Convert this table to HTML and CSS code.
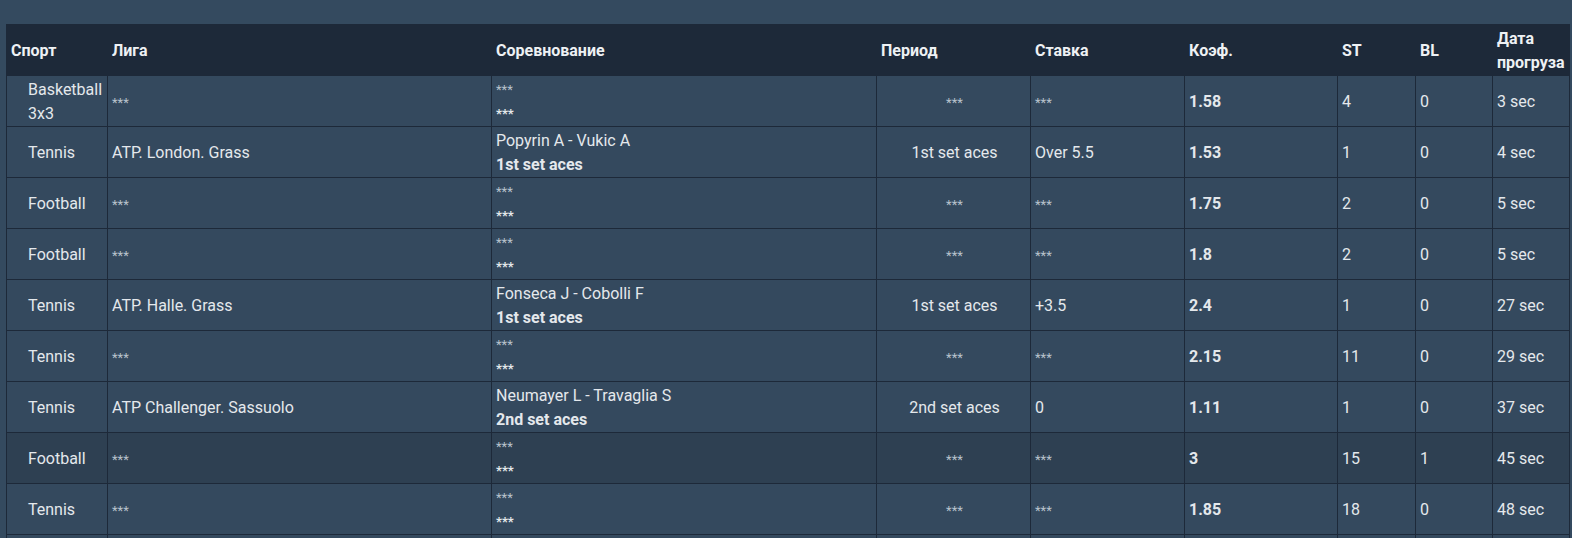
FILE: index.html
```html
<!DOCTYPE html>
<html lang="ru">
<head>
<meta charset="utf-8">
<title>Прогрузы</title>
<link rel="stylesheet" href="styles.css">
</head>
<body>
<div class="page">
  <table class="grid">
    <colgroup>
      <col class="c-sport"><col class="c-league"><col class="c-event"><col class="c-period"><col class="c-bet"><col class="c-odds"><col class="c-st"><col class="c-bl"><col class="c-date">
    </colgroup>
    <thead>
      <tr>
        <th>Спорт</th><th>Лига</th><th>Соревнование</th><th>Период</th><th>Ставка</th><th>Коэф.</th><th>ST</th><th>BL</th><th>Дата прогруза</th>
      </tr>
    </thead>
    <tbody>
      <tr>
        <td class="sport">Basketball 3x3</td><td><span class="hid">***</span></td>
        <td><div class="hid">***</div><div class="hid b">***</div></td>
        <td class="center"><span class="hid">***</span></td><td><span class="hid">***</span></td>
        <td class="b">1.58</td><td>4</td><td>0</td><td>3 sec</td>
      </tr>
      <tr>
        <td class="sport">Tennis</td><td>ATP. London. Grass</td>
        <td><div>Popyrin A - Vukic A</div><div class="b">1st set aces</div></td>
        <td class="center">1st set aces</td><td>Over 5.5</td>
        <td class="b">1.53</td><td>1</td><td>0</td><td>4 sec</td>
      </tr>
      <tr>
        <td class="sport">Football</td><td><span class="hid">***</span></td>
        <td><div class="hid">***</div><div class="hid b">***</div></td>
        <td class="center"><span class="hid">***</span></td><td><span class="hid">***</span></td>
        <td class="b">1.75</td><td>2</td><td>0</td><td>5 sec</td>
      </tr>
      <tr>
        <td class="sport">Football</td><td><span class="hid">***</span></td>
        <td><div class="hid">***</div><div class="hid b">***</div></td>
        <td class="center"><span class="hid">***</span></td><td><span class="hid">***</span></td>
        <td class="b">1.8</td><td>2</td><td>0</td><td>5 sec</td>
      </tr>
      <tr>
        <td class="sport">Tennis</td><td>ATP. Halle. Grass</td>
        <td><div>Fonseca J - Cobolli F</div><div class="b">1st set aces</div></td>
        <td class="center">1st set aces</td><td>+3.5</td>
        <td class="b">2.4</td><td>1</td><td>0</td><td>27 sec</td>
      </tr>
      <tr>
        <td class="sport">Tennis</td><td><span class="hid">***</span></td>
        <td><div class="hid">***</div><div class="hid b">***</div></td>
        <td class="center"><span class="hid">***</span></td><td><span class="hid">***</span></td>
        <td class="b">2.15</td><td>11</td><td>0</td><td>29 sec</td>
      </tr>
      <tr>
        <td class="sport">Tennis</td><td>ATP Challenger. Sassuolo</td>
        <td><div>Neumayer L - Travaglia S</div><div class="b">2nd set aces</div></td>
        <td class="center">2nd set aces</td><td>0</td>
        <td class="b">1.11</td><td>1</td><td>0</td><td>37 sec</td>
      </tr>
      <tr class="hl">
        <td class="sport">Football</td><td><span class="hid">***</span></td>
        <td><div class="hid">***</div><div class="hid b">***</div></td>
        <td class="center"><span class="hid">***</span></td><td><span class="hid">***</span></td>
        <td class="b">3</td><td>15</td><td>1</td><td>45 sec</td>
      </tr>
      <tr>
        <td class="sport">Tennis</td><td><span class="hid">***</span></td>
        <td><div class="hid">***</div><div class="hid b">***</div></td>
        <td class="center"><span class="hid">***</span></td><td><span class="hid">***</span></td>
        <td class="b">1.85</td><td>18</td><td>0</td><td>48 sec</td>
      </tr>
      <tr class="tail">
        <td></td><td></td><td></td><td></td><td></td><td></td><td></td><td></td><td></td>
      </tr>
    </tbody>
  </table>
</div>
</body>
</html>
```

FILE: styles.css
```css
html, body {
  margin: 0;
  padding: 0;
  background: #344a5f;
}
body {
  font-family: Roboto, "Noto Sans", "Liberation Sans", sans-serif;
  font-size: 16px;
  color: #e4e8ec;
  overflow: hidden;
}
.page {
  padding: 24px 0 0 6px;
}
.grid {
  border-collapse: collapse;
  table-layout: fixed;
  width: 1563px;
}
.c-sport { width: 101px; }
.c-league { width: 384px; }
.c-event { width: 385px; }
.c-period { width: 154px; }
.c-bet { width: 154px; }
.c-odds { width: 153px; }
.c-st { width: 78px; }
.c-bl { width: 77px; }
.c-date { width: 77px; }

.grid th,
.grid td {
  border: 1px solid #1d2939;
  line-height: 24px;
  padding: 2px 2px 0 4px;
  text-align: left;
  vertical-align: middle;
}
.grid th {
  background: #1d2939;
  color: #eef1f4;
  font-weight: 700;
}
.grid td {
  background: #34495e;
  height: 48px;
}
.grid tr.hl td {
  background: #2e4052;
}
.grid td.sport {
  padding-left: 21px;
}
.grid td.center {
  text-align: center;
}
.b {
  font-weight: 700;
}
.hid {
  font-size: 13px;
  color: #b8c2cc;
}
.hid.b {
  color: #e4e8ec;
}
```
